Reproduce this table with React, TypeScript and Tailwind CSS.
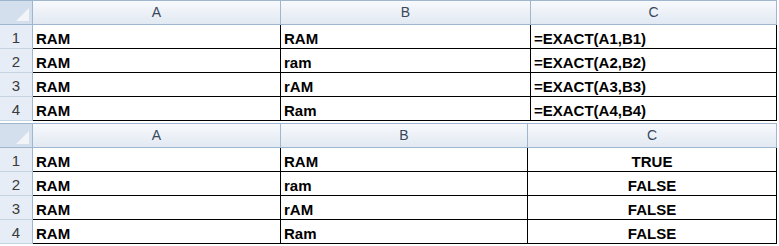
const rows = [
  ['RAM', 'RAM', '=EXACT(A1,B1)', 'TRUE'],
  ['RAM', 'ram', '=EXACT(A2,B2)', 'FALSE'],
  ['RAM', 'rAM', '=EXACT(A3,B3)', 'FALSE'],
  ['RAM', 'Ram', '=EXACT(A4,B4)', 'FALSE'],
];

const Corner = () => (
  <div className="relative h-full w-[33px] shrink-0 border-r border-[#9eb6ce] bg-[#d4dfee]">
    <svg className="absolute bottom-[3px] right-[3px]" width="13" height="13" viewBox="0 0 13 13">
      <polygon points="13,0 13,13 0,13" fill="#f2f4f7" />
    </svg>
  </div>
);

const SheetTable = ({ showValues, widths }: { showValues: boolean; widths: number[] }) => {
  const cols = ['A', 'B', 'C'];
  return (
    <div className="w-[777px] border-t border-[#9eb6ce]">
      <div className="flex h-[24px] border-b border-[#9eb6ce] bg-gradient-to-b from-[#f7f9fc] to-[#e2e9f2]">
        <Corner />
        {cols.map((c, i) => (
          <div
            key={c}
            style={{ width: widths[i] }}
            className="flex shrink-0 items-center justify-center border-r border-[#9eb6ce] text-[14px] text-[#37475c]"
          >
            {c}
          </div>
        ))}
      </div>
      {rows.map((r, ri) => (
        <div key={ri} className="flex h-[24px]">
          <div className="flex w-[33px] shrink-0 items-end justify-center border-r border-b border-r-[#9eb6ce] border-b-[#c5d3e3] bg-[#e6edf6] pb-[1px] text-[15px] leading-[18px] text-[#3a3a3a]">
            {ri + 1}
          </div>
          {[r[0], r[1], showValues ? r[3] : r[2]].map((v, ci) => (
            <div
              key={ci}
              style={{ width: widths[ci] }}
              className={`flex shrink-0 items-end border-r border-b border-black px-[3px] text-[15px] leading-[18px] font-bold text-black ${
                showValues && ci === 2 ? 'justify-center' : ''
              }`}
            >
              {v}
            </div>
          ))}
        </div>
      ))}
    </div>
  );
};

export default function App() {
  return (
    <div className="h-[246px] w-[779px] bg-white font-['Liberation_Sans',Arial,sans-serif]">
      <SheetTable showValues={false} widths={[248, 250, 246]} />
      <div className="h-[2px]" />
      <SheetTable showValues={true} widths={[248, 247, 249]} />
    </div>
  );
}
